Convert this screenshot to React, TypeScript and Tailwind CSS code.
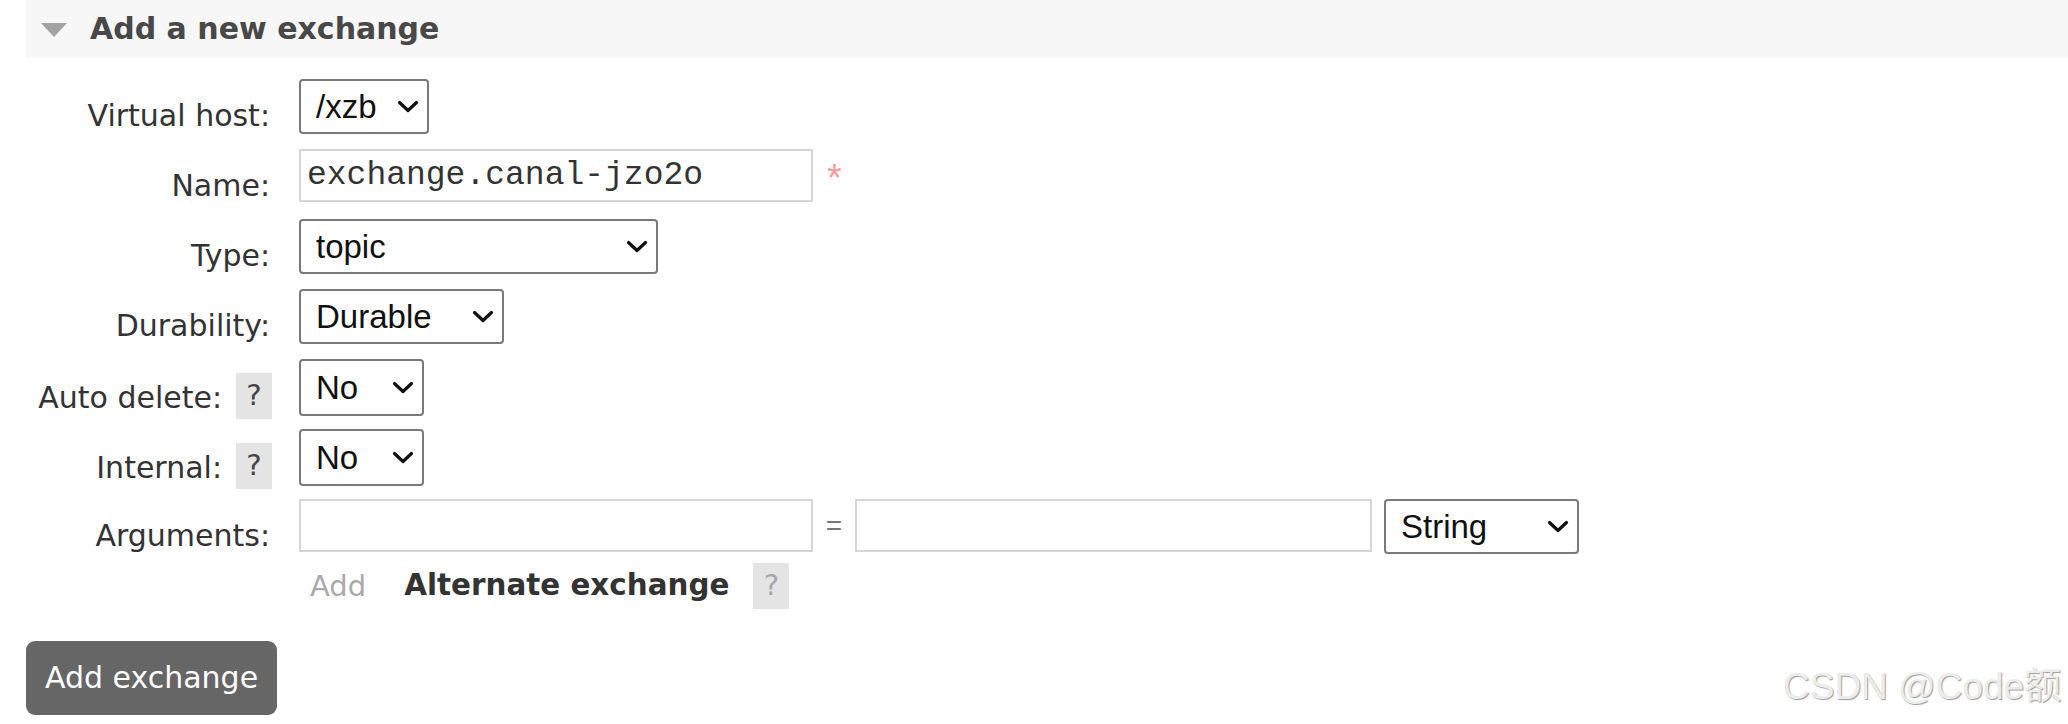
import React from "react";

const Chevron = () => (
  <svg width="22" height="13" viewBox="0 0 22 13" className="shrink-0">
    <path d="M2.5 2.5 L11 10.5 L19.5 2.5" stroke="#111" strokeWidth="3.2" fill="none" strokeLinecap="round" strokeLinejoin="round" />
  </svg>
);

const Select = ({ value, w, h = "h-[55px]" }: { value: string; w: string; h?: string }) => (
  <div
    className={`${w} ${h} bg-white border-2 border-[#7a7a7a] rounded-[4px] flex items-center justify-between pl-[15px] pr-[8px] text-[33px] text-[#111] font-['Liberation_Sans',Arial,sans-serif]`}
  >
    <span className="leading-none">{value}</span>
    <Chevron />
  </div>
);

const Help = ({ dim }: { dim?: boolean }) => (
  <span
    className={`inline-flex w-[36px] h-[46px] bg-[#e4e4e4] items-center justify-center text-[29px] ${dim ? "text-[#a8a8a8]" : "text-[#444]"}`}
  >
    ?
  </span>
);

const Label = ({ text, help }: { text: string; help?: boolean }) => (
  <div className="w-[272px] shrink-0 flex justify-end items-start">
    {help ? (
      <div className="flex items-center pt-[12px]">
        <span className="text-[30px] leading-[46px] text-[#333] pt-[4px]">{text}</span>
        <span className="ml-[14px]">
          <Help />
        </span>
      </div>
    ) : (
      <span className="text-[30px] leading-[36px] text-[#333] pt-[19px] pr-[2px]">{text}</span>
    )}
  </div>
);

const TextInput = ({ w, value }: { w: string; value?: string }) => (
  <div
    className={`${w} h-[53px] bg-white border-2 border-[#d6d6d6] flex items-center pl-[6px] text-[33px] text-[#333] font-['Liberation_Mono','Courier_New',monospace]`}
  >
    {value}
  </div>
);

export default function App() {
  return (
    <div className="relative w-[2068px] h-[724px] bg-white overflow-hidden font-['DejaVu_Sans',Verdana,sans-serif]">
      <div className="ml-[26px] h-[58px] bg-[#f7f7f7] flex items-center">
        <svg width="26" height="14" viewBox="0 0 26 14" className="ml-[15px] mt-[2px]">
          <path d="M0 0 L26 0 L13 14 Z" fill="#a3a3a3" />
        </svg>
        <h2 className="ml-[23px] text-[30px] font-bold text-[#484848] leading-none">Add a new exchange</h2>
      </div>

      <div className="pt-[21px]">
        <div className="flex h-[70px] items-start">
          <Label text="Virtual host:" />
          <div className="ml-[27px]">
            <Select value="/xzb" w="w-[130px]" />
          </div>
        </div>

        <div className="flex h-[70px] items-start">
          <Label text="Name:" />
          <div className="ml-[27px] flex items-start">
            <TextInput w="w-[514px]" value="exchange.canal-jzo2o" />
            <span className="ml-[14px] mt-[10px] text-[38px] leading-none text-[#ff9a9a] font-['Liberation_Sans',Arial,sans-serif]">*</span>
          </div>
        </div>

        <div className="flex h-[70px] items-start">
          <Label text="Type:" />
          <div className="ml-[27px]">
            <Select value="topic" w="w-[359px]" />
          </div>
        </div>

        <div className="flex h-[70px] items-start">
          <Label text="Durability:" />
          <div className="ml-[27px]">
            <Select value="Durable" w="w-[205px]" />
          </div>
        </div>

        <div className="flex h-[70px] items-start">
          <Label text="Auto delete:" help />
          <div className="ml-[27px]">
            <Select value="No" w="w-[125px]" h="h-[57px]" />
          </div>
        </div>

        <div className="flex h-[70px] items-start">
          <Label text="Internal:" help />
          <div className="ml-[27px]">
            <Select value="No" w="w-[125px]" h="h-[57px]" />
          </div>
        </div>

        <div className="flex h-[64px] items-start">
          <Label text="Arguments:" />
          <div className="ml-[27px] flex items-start">
            <TextInput w="w-[514px]" />
            <span className="w-[42px] h-[53px] flex items-center justify-center text-[28px] text-[#777] font-['Liberation_Sans',Arial,sans-serif]">=</span>
            <TextInput w="w-[517px]" />
            <div className="ml-[12px]">
              <Select value="String" w="w-[195px]" />
            </div>
          </div>
        </div>

        <div className="flex h-[46px] items-center ml-[299px]">
          <span className="ml-[11px] text-[29px] text-[#aaa] leading-none">Add</span>
          <span className="ml-[38px] text-[29.4px] font-bold text-[#333] leading-none">Alternate exchange</span>
          <span className="ml-[24px]">
            <Help dim />
          </span>
        </div>

        <div className="mt-[32px] ml-[26px]">
          <button className="h-[74px] w-[251px] bg-[#666] text-white rounded-[9px] text-[30px] leading-none">
            Add exchange
          </button>
        </div>
      </div>

      <div className="absolute left-[1783px] top-[668px] text-[37px] leading-none text-[#ececec] [text-shadow:1px_1px_1px_#9a9a9a] font-['Liberation_Sans','Noto_Sans_CJK_SC',sans-serif]">
        CSDN @Code额
      </div>
    </div>
  );
}
